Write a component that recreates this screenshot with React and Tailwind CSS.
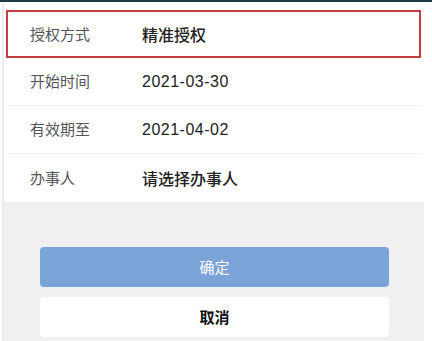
export default function App() {
  const font = { fontFamily: '"Noto Sans CJK SC", "Noto Sans", sans-serif' };
  const num = { fontFamily: '"Liberation Sans", "Noto Sans CJK SC", sans-serif' };
  return (
    <div className="w-[432px] h-[341px] bg-white flex flex-col overflow-hidden" style={font}>
      <div className="h-[2px] bg-[#1d3d4b]" />
      <div className="flex-1 flex">
        <div className="w-[2px]" />
        <div className="w-[2px] bg-[#ececec]" />
        <div className="w-[420px] flex flex-col">
          <div className="pt-[8px] flex flex-col">
            <div className="ml-[2px] w-[415px] h-[48px] border-2 border-[#c33d3d] flex items-center pl-[22px]">
              <span className="w-[112px] text-[15px] text-[#555]">授权方式</span>
              <span className="text-[16px] text-[#222] font-medium">精准授权</span>
            </div>
            <div className="h-[48px] flex items-center pl-[24px] mx-[2px] border-b border-[#f2f2f2]">
              <span className="w-[112px] text-[15px] text-[#555]">开始时间</span>
              <span className="text-[16px] tracking-[0.5px] text-[#222]" style={num}>2021-03-30</span>
            </div>
            <div className="h-[48px] flex items-center pl-[24px] mx-[2px] border-b border-[#f2f2f2]">
              <span className="w-[112px] text-[15px] text-[#555]">有效期至</span>
              <span className="text-[16px] tracking-[0.5px] text-[#222]" style={num}>2021-04-02</span>
            </div>
            <div className="h-[48px] flex items-center pl-[24px] mx-[2px]">
              <span className="w-[112px] text-[15px] text-[#555]">办事人</span>
              <span className="text-[16px] text-[#222] font-medium">请选择办事人</span>
            </div>
          </div>
          <div className="flex-1 bg-[#f0f0f0] flex flex-col pt-[45px] pl-[36px] gap-[10px]">
            <div className="w-[349px] h-[40px] rounded-[4px] bg-[#7aa4d8] flex items-center justify-center text-[15px] text-white">
              确定
            </div>
            <div className="w-[349px] h-[40px] rounded-[4px] bg-white flex items-center justify-center text-[15px] text-[#111] font-bold">
              取消
            </div>
          </div>
        </div>
      </div>
    </div>
  );
}
